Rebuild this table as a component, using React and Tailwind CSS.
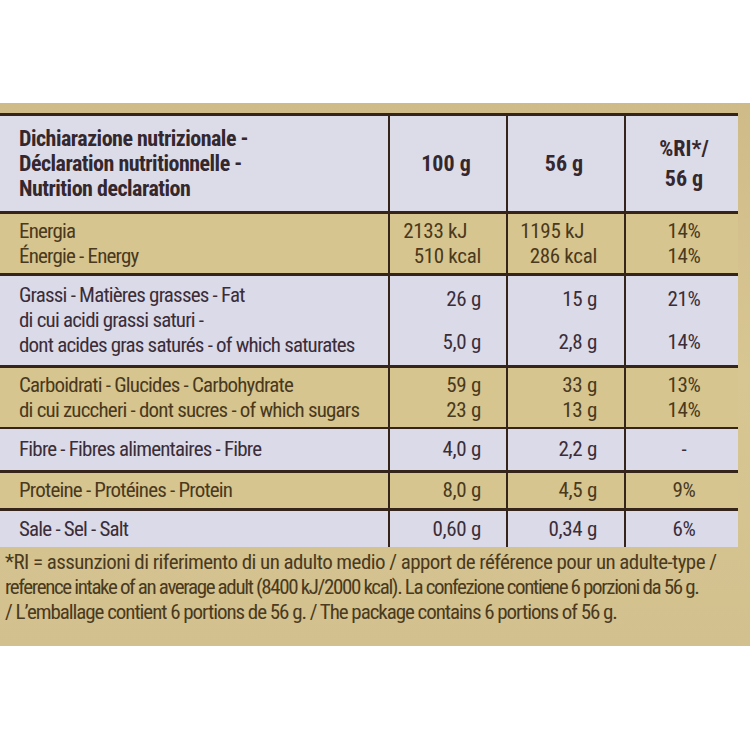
const FONT = "font-['Liberation_Sans_Narrow','Roboto_Condensed','DejaVu_Sans_Condensed','Liberation_Sans',sans-serif]";

const ROWS = [
  {
    bg: 'bg-[#d6c58f]',
    ink: 'text-[#4a391d]',
    h: 'h-[62px]',
    border: 'border-b-[3px]',
    label: ['Energia', 'Énergie - Energy'],
    a: ['2133 kJ', '510 kcal'],
    b: ['1195 kJ', '286 kcal'],
    c: ['14%', '14%'],
    energy: true,
  },
  {
    bg: 'bg-[#dadae8]',
    ink: 'text-[#3b2d38]',
    h: 'h-[92px]',
    border: 'border-b-[3px]',
    label: ['Grassi - Matières grasses - Fat', 'di cui acidi grassi saturi -', 'dont acides gras saturés - of which saturates'],
    a: ['26 g', '5,0 g'],
    b: ['15 g', '2,8 g'],
    c: ['21%', '14%'],
    spread: true,
  },
  {
    bg: 'bg-[#d6c58f]',
    ink: 'text-[#4a391d]',
    h: 'h-[61px]',
    border: 'border-b-[2px]',
    label: ['Carboidrati - Glucides - Carbohydrate', 'di cui zuccheri - dont sucres - of which sugars'],
    a: ['59 g', '23 g'],
    b: ['33 g', '13 g'],
    c: ['13%', '14%'],
  },
  {
    bg: 'bg-[#dadae8]',
    ink: 'text-[#3b2d38]',
    h: 'h-[44px]',
    border: 'border-b-[3px]',
    label: ['Fibre - Fibres alimentaires - Fibre'],
    a: ['4,0 g'],
    b: ['2,2 g'],
    c: ['-'],
  },
  {
    bg: 'bg-[#d6c58f]',
    ink: 'text-[#4a391d]',
    h: 'h-[38px]',
    border: 'border-b-[3px]',
    label: ['Proteine - Protéines - Protein'],
    a: ['8,0 g'],
    b: ['4,5 g'],
    c: ['9%'],
  },
  {
    bg: 'bg-[#dadae8]',
    ink: 'text-[#3b2d38]',
    h: 'h-[36px]',
    border: 'border-b-0',
    label: ['Sale - Sel - Salt'],
    a: ['0,60 g'],
    b: ['0,34 g'],
    c: ['6%'],
  },
];

function Values({ items, align, spread, energy, shift }) {
  return (
    <div className={`flex flex-col ${spread ? 'gap-[18px]' : ''} ${align}`}>
      {items.map((v, i) => (
        <span key={i} className={`leading-[25px] ${energy && i === 0 ? shift : ''}`}>{v}</span>
      ))}
    </div>
  );
}

function Row({ row }) {
  return (
    <div className={`grid grid-cols-[388px_118px_118px_114px] ${row.bg} ${row.ink} ${row.h} ${row.border} border-[#35241a] text-[21px]`}>
      <div className="flex flex-col justify-center pl-[19px] tracking-[-0.8px]">
        {row.label.map((l, i) => (
          <span key={i} className="leading-[25px] whitespace-nowrap">{l}</span>
        ))}
      </div>
      <div className="flex items-center justify-end border-l-2 border-[#35241a] pr-[25px] tracking-[-0.3px]">
        <Values items={row.a} align="items-end" spread={row.spread} energy={row.energy} shift="mr-[14px]" />
      </div>
      <div className="flex items-center justify-end border-l-2 border-[#35241a] pr-[27px] tracking-[-0.3px]">
        <Values items={row.b} align="items-end" spread={row.spread} energy={row.energy} shift="mr-[13px]" />
      </div>
      <div className="flex items-center justify-center border-l-2 border-[#35241a] pl-[4px] tracking-[-0.3px]">
        <Values items={row.c} align="items-center" spread={row.spread} />
      </div>
    </div>
  );
}

export default function App() {
  return (
    <div className={`h-[750px] w-[750px] overflow-hidden bg-white pt-[103px] ${FONT}`}>
      <div className="h-[543px] bg-gradient-to-b from-[#cfbb88] via-[#d8c692] to-[#d2c08e] pt-[10px]">
        <div className="w-[738px] border-t-[3px] border-[#35241a]">
          <div className="grid h-[98px] grid-cols-[388px_118px_118px_114px] border-b-[3px] border-[#35241a] bg-[#dcdce9] text-[22px] font-bold text-[#34282e]">
            <div className="flex flex-col justify-center pl-[19px] tracking-[-0.5px]">
              <span className="leading-[25px]">Dichiarazione nutrizionale -</span>
              <span className="leading-[25px]">Déclaration nutritionnelle -</span>
              <span className="leading-[25px]">Nutrition declaration</span>
            </div>
            <div className="flex items-center justify-center border-l-2 border-[#35241a] pr-[4px]">100 g</div>
            <div className="flex items-center justify-center border-l-2 border-[#35241a] pr-[4px]">56 g</div>
            <div className="flex flex-col items-center justify-center border-l-2 border-[#35241a] pl-[4px]">
              <span className="leading-[30px]">%RI*/</span>
              <span className="leading-[30px]">56 g</span>
            </div>
          </div>
          {ROWS.map((row, i) => (
            <Row key={i} row={row} />
          ))}
        </div>
        <div className="pl-[5px] pt-[3px] text-[21px] leading-[25px] text-[#4a3a20]">
          <p className="whitespace-nowrap tracking-[-0.57px]">*RI = assunzioni di riferimento di un adulto medio / apport de référence pour un adulte-type /</p>
          <p className="whitespace-nowrap tracking-[-1.36px]">reference intake of an average adult (8400 kJ/2000 kcal). La confezione contiene 6 porzioni da 56 g.</p>
          <p className="whitespace-nowrap tracking-[-1.05px]">/ L’emballage contient 6 portions de 56 g. / The package contains 6 portions of 56 g.</p>
        </div>
      </div>
    </div>
  );
}
